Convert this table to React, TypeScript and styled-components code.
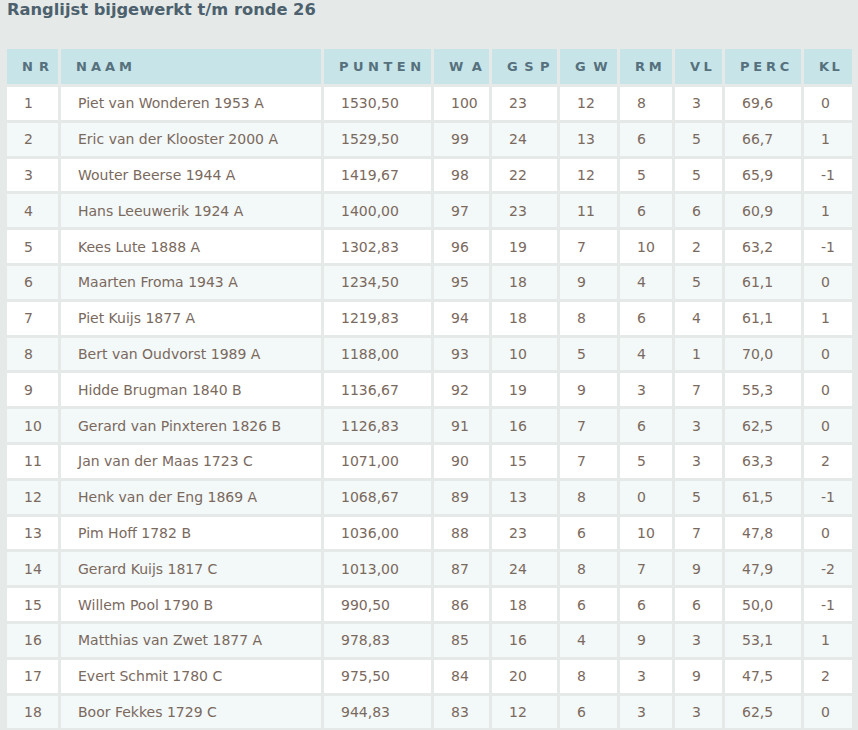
import styled, { createGlobalStyle } from "styled-components";

const GlobalStyle = createGlobalStyle`
    body {
        margin: 0;
        background-color: #e5e9e8;
        font-family: "DejaVu Sans", Verdana, sans-serif;
    }
`;

const Page = styled.div`
    padding: 0 0 0 4px;
`;

const Title = styled.h2`
    margin: 0 0 27px 3px;
    font-size: 16.3px;
    line-height: 20px;
    font-weight: bold;
    color: #4c616d;
`;

const Table = styled.table`
    border-collapse: separate;
    border-spacing: 3px;
    table-layout: fixed;
    width: 851px;
    margin-top: -1px;
`;

const Th = styled.th<{ $spaced: number }>`
    height: 35px;
    padding: 0 0 0 15px;
    background-color: #c7e5e8;
    color: #56707d;
    font-size: 13px;
    font-weight: bold;
    text-align: left;
    letter-spacing: ${(p) => p.$spaced}px;
    white-space: nowrap;
`;

const Tr = styled.tr<{ $even: boolean }>`
    background-color: ${(p) => (p.$even ? "#f3f8f8" : "#ffffff")};
`;

const Td = styled.td`
    height: 32.8px;
    padding: 0 0 0 17px;
    color: #7a695d;
    font-size: 14px;
    white-space: nowrap;
    overflow: hidden;
`;

const columns = [
    { label: "NR", width: 51, spaced: 6 },
    { label: "NAAM", width: 260, spaced: 4 },
    { label: "PUNTEN", width: 107, spaced: 4.5 },
    { label: "WA", width: 55, spaced: 9 },
    { label: "GSP", width: 65, spaced: 6.5 },
    { label: "GW", width: 57, spaced: 7.5 },
    { label: "RM", width: 52, spaced: 3.8 },
    { label: "VL", width: 47, spaced: 3.4 },
    { label: "PERC", width: 76, spaced: 3.8 },
    { label: "KL", width: 48, spaced: 2.5 },
];

const rows: string[][] = [
    ["1", "Piet van Wonderen 1953 A", "1530,50", "100", "23", "12", "8", "3", "69,6", "0"],
    ["2", "Eric van der Klooster 2000 A", "1529,50", "99", "24", "13", "6", "5", "66,7", "1"],
    ["3", "Wouter Beerse 1944 A", "1419,67", "98", "22", "12", "5", "5", "65,9", "-1"],
    ["4", "Hans Leeuwerik 1924 A", "1400,00", "97", "23", "11", "6", "6", "60,9", "1"],
    ["5", "Kees Lute 1888 A", "1302,83", "96", "19", "7", "10", "2", "63,2", "-1"],
    ["6", "Maarten Froma 1943 A", "1234,50", "95", "18", "9", "4", "5", "61,1", "0"],
    ["7", "Piet Kuijs 1877 A", "1219,83", "94", "18", "8", "6", "4", "61,1", "1"],
    ["8", "Bert van Oudvorst 1989 A", "1188,00", "93", "10", "5", "4", "1", "70,0", "0"],
    ["9", "Hidde Brugman 1840 B", "1136,67", "92", "19", "9", "3", "7", "55,3", "0"],
    ["10", "Gerard van Pinxteren 1826 B", "1126,83", "91", "16", "7", "6", "3", "62,5", "0"],
    ["11", "Jan van der Maas 1723 C", "1071,00", "90", "15", "7", "5", "3", "63,3", "2"],
    ["12", "Henk van der Eng 1869 A", "1068,67", "89", "13", "8", "0", "5", "61,5", "-1"],
    ["13", "Pim Hoff 1782 B", "1036,00", "88", "23", "6", "10", "7", "47,8", "0"],
    ["14", "Gerard Kuijs 1817 C", "1013,00", "87", "24", "8", "7", "9", "47,9", "-2"],
    ["15", "Willem Pool 1790 B", "990,50", "86", "18", "6", "6", "6", "50,0", "-1"],
    ["16", "Matthias van Zwet 1877 A", "978,83", "85", "16", "4", "9", "3", "53,1", "1"],
    ["17", "Evert Schmit 1780 C", "975,50", "84", "20", "8", "3", "9", "47,5", "2"],
    ["18", "Boor Fekkes 1729 C", "944,83", "83", "12", "6", "3", "3", "62,5", "0"],
];

const App = () => {
    return (
        <Page>
            <GlobalStyle />
            <Title>Ranglijst bijgewerkt t/m ronde 26</Title>
            <Table>
                <colgroup>
                    {columns.map((c) => (
                        <col key={c.label} style={{ width: c.width }} />
                    ))}
                </colgroup>
                <thead>
                    <tr>
                        {columns.map((c) => (
                            <Th key={c.label} $spaced={c.spaced}>{c.label}</Th>
                        ))}
                    </tr>
                </thead>
                <tbody>
                    {rows.map((r, i) => (
                        <Tr key={r[0]} $even={i % 2 === 1}>
                            {r.map((v, j) => (
                                <Td key={j}>{v}</Td>
                            ))}
                        </Tr>
                    ))}
                </tbody>
            </Table>
        </Page>
    );
};

export default App;
